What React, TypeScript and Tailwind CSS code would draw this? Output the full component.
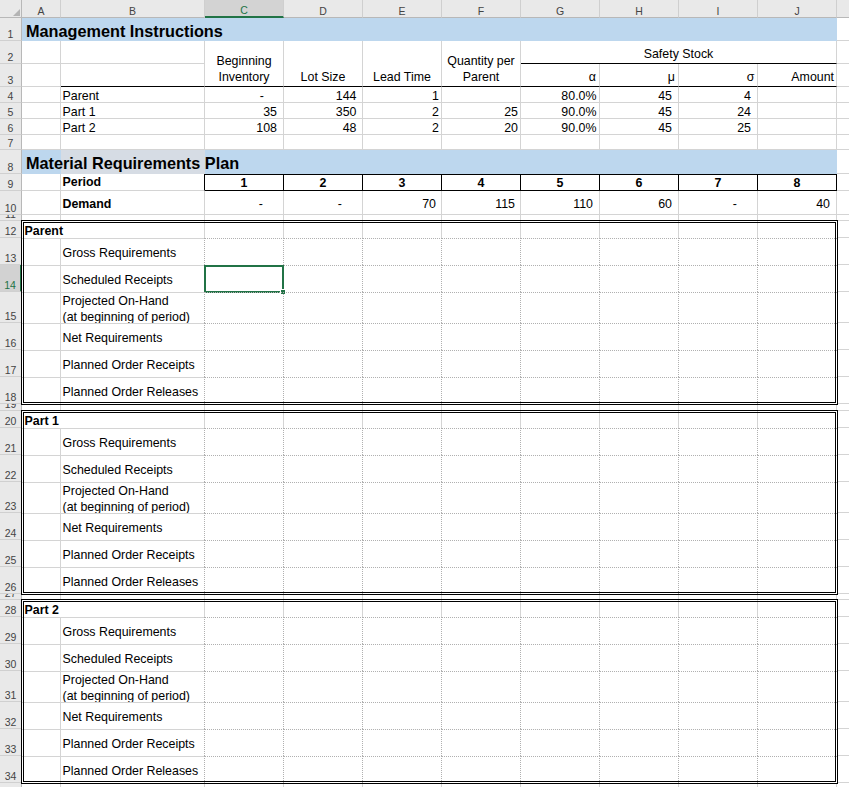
import React from 'react';

function RowHead({ n, h, sel = false }: { n: number; h: string; sel?: boolean }) {
  const base = `${h} w-[22px] shrink-0 flex items-end justify-center overflow-hidden border-b border-b-[#d0d0d0] text-[10.5px] leading-[12px]`;
  return sel ? (
    <div className={`${base} bg-[#d2d2d2] text-[#217346] border-r-2 border-r-[#217346]`}>{n}</div>
  ) : (
    <div className={`${base} bg-[#e9e9e9] text-[#444444] border-r border-r-[#b8b8b8]`}>{n}</div>
  );
}

function KCell({ h }: { h?: string }) {
  return <div className={`${h ?? ''} flex-1 min-w-0 border-b border-[#d4d4d4]`} />;
}

function EmptyRow({ n, h }: { n: number; h: string }) {
  return (
    <div className={`flex ${h}`}>
      <RowHead n={n} h={h} />
      <div className="w-[39px] shrink-0 border-r border-b border-[#d4d4d4]" />
      <div className="w-[144px] shrink-0 border-r border-b border-[#d4d4d4]" />
      {Array.from({ length: 8 }).map((_, j) => (
        <div key={j} className="w-[79px] shrink-0 border-r border-b border-[#d4d4d4]" />
      ))}
      <KCell />
    </div>
  );
}

function Hdr({ lines }: { lines: string[] }) {
  return (
    <div className="w-[79px] shrink-0 border-r border-r-[#d4d4d4] border-b border-b-black flex flex-col justify-end items-center pb-[1px] leading-[15.5px] text-center whitespace-nowrap">
      {lines.map((l) => (
        <span key={l}>{l}</span>
      ))}
    </div>
  );
}

function InstRow({ n, name, vals }: { n: number; name: string; vals: string[] }) {
  const pads = ['pr-[6px]', 'pr-[5.5px]', 'pr-[2px]', 'pr-[2px]', 'pr-[2.5px]', 'pr-[6px]', 'pr-[6px]', 'pr-[2px]'];
  return (
    <div className="flex h-[16px]">
      <RowHead n={n} h="h-[16px]" />
      <div className="w-[39px] shrink-0 border-r border-b border-[#d4d4d4]" />
      <div className="w-[144px] shrink-0 border-r border-b border-[#d4d4d4] flex items-end pl-[1.5px] leading-[11px] whitespace-nowrap">
        {name}
      </div>
      {vals.map((v, j) => (
        <div
          key={j}
          className={`w-[79px] shrink-0 border-r border-b border-[#d4d4d4] flex items-end justify-end leading-[11px] whitespace-nowrap ${
            v === '-' ? 'pr-[19px]' : pads[j]
          }`}
        >
          {v}
        </div>
      ))}
      <KCell />
    </div>
  );
}

const labels = [
  'Gross Requirements',
  'Scheduled Receipts',
  'PROJ',
  'Net Requirements',
  'Planned Order Receipts',
  'Planned Order Releases',
];

function Block({ start, title, sel = false }: { start: number; title: string; sel?: boolean }) {
  const hs = ['h-[27px]', 'h-[27px]', 'h-[31px]', 'h-[27px]', 'h-[27px]', 'h-[27px]'];
  return (
    <div className="flex">
      <div className="flex flex-col w-[22px] shrink-0">
        <RowHead n={start} h="h-[17px]" />
        {hs.map((h, i) => (
          <RowHead key={i} n={start + 1 + i} h={h} sel={sel && i === 1} />
        ))}
      </div>
      <div className="w-[815px] shrink-0 flex flex-col relative z-10 outline-[3px] outline-double outline-black outline-offset-[-2px]">
        <div className="flex h-[17px]">
          <div className="w-[183px] shrink-0 border-r border-[#d4d4d4] flex items-end pb-[1px] pl-[2.5px] font-bold leading-[11px] whitespace-nowrap">
            {title}
          </div>
          {Array.from({ length: 8 }).map((_, j) => (
            <div key={j} className={`w-[79px] shrink-0 ${j < 7 ? 'border-r border-[#d4d4d4]' : ''}`} />
          ))}
        </div>
        {labels.map((lab, i) => (
          <div key={i} className={`flex ${hs[i]}`}>
            <div className="w-[39px] shrink-0 border-t border-r border-[#d4d4d4]" />
            {lab === 'PROJ' ? (
              <div className="w-[143px] shrink-0 border-t border-[#d4d4d4] overflow-hidden pl-[1.5px] pt-[1px] flex flex-col leading-[15.7px] whitespace-nowrap">
                <span>Projected On-Hand</span>
                <span>(at beginning of period)</span>
              </div>
            ) : (
              <div className="w-[143px] shrink-0 border-t border-[#d4d4d4] pl-[1.5px] pt-[1.5px] flex items-center leading-[14px] whitespace-nowrap">
                {lab}
              </div>
            )}
            <div className="w-[80px] shrink-0 border-t border-l border-r border-dotted border-[#b0b0b0] relative">
              {sel && i === 1 && (
                <>
                  <div className="absolute -left-[1px] -top-[1px] -right-[1px] -bottom-[1px] border-2 border-[#217346]" />
                  <div className="absolute -right-[3px] -bottom-[3px] w-[6px] h-[6px] bg-[#217346] border border-white" />
                </>
              )}
            </div>
            {Array.from({ length: 6 }).map((_, j) => (
              <div key={j} className="w-[79px] shrink-0 border-t border-r border-dotted border-[#b0b0b0]" />
            ))}
            <div className="w-[79px] shrink-0 border-t border-dotted border-[#b0b0b0]" />
          </div>
        ))}
      </div>
      <div className="flex-1 min-w-0 flex flex-col">
        <KCell h="h-[17px] flex-none" />
        {hs.map((h, i) => (
          <div key={i} className={`${h} border-b border-[#d4d4d4]`} />
        ))}
      </div>
    </div>
  );
}

export default function App() {
  const cols = ['A', 'B', 'C', 'D', 'E', 'F', 'G', 'H', 'I', 'J'];
  const demand: [string, string][] = [
    ['-', 'pr-[20px]'],
    ['-', 'pr-[20px]'],
    ['70', 'pr-[5px]'],
    ['115', 'pr-[5px]'],
    ['110', 'pr-[6px]'],
    ['60', 'pr-[6px]'],
    ['-', 'pr-[20px]'],
    ['40', 'pr-[6px]'],
  ];
  return (
    <div className="w-[849px] h-[787px] overflow-hidden bg-white text-black font-['Liberation_Sans',Arial,sans-serif] text-[12.4px] leading-[14px] flex flex-col">
      {/* column header */}
      <div className="flex h-[18px] shrink-0">
        <div className="w-[22px] shrink-0 bg-[#e9e9e9] border-r border-b border-[#b8b8b8] flex items-end justify-end pr-[1px] pb-[1px]">
          <svg width="7" height="7" viewBox="0 0 7 7">
            <path d="M7 0V7H0Z" fill="#b4b4b4" />
          </svg>
        </div>
        {cols.map((c) => (
          <div
            key={c}
            className={`${c === 'A' ? 'w-[39px]' : c === 'B' ? 'w-[144px]' : 'w-[79px]'} shrink-0 flex items-end justify-center text-[10.5px] leading-[12px] border-r border-r-[#cfcfcf] ${
              c === 'C'
                ? 'bg-[#d3d3d3] text-[#217346] border-b-2 border-b-[#217346]'
                : 'bg-[#e9e9e9] text-[#444444] border-b border-b-[#b8b8b8]'
            }`}
          >
            {c}
          </div>
        ))}
        <div className="flex-1 min-w-0 bg-[#e9e9e9] border-b border-b-[#b8b8b8]" />
      </div>

      {/* row 1 */}
      <div className="flex h-[23px] shrink-0">
        <RowHead n={1} h="h-[23px]" />
        <div className="w-[815px] shrink-0 bg-[#bdd7ee] flex items-center pt-[3px] pl-[4px] text-[16.25px] leading-[18px] font-bold whitespace-nowrap">
          Management Instructions
        </div>
        <KCell />
      </div>

      {/* rows 2-3 */}
      <div className="flex h-[46px] shrink-0">
        <div className="flex flex-col w-[22px] shrink-0">
          <RowHead n={2} h="h-[23px]" />
          <RowHead n={3} h="h-[23px]" />
        </div>
        <div className="flex flex-col w-[39px] shrink-0">
          <div className="h-[23px] border-r border-b border-[#d4d4d4]" />
          <div className="h-[23px] border-r border-b border-[#d4d4d4]" />
        </div>
        <div className="flex flex-col w-[144px] shrink-0">
          <div className="h-[23px] border-r border-b border-[#d4d4d4]" />
          <div className="h-[23px] border-r border-r-[#d4d4d4] border-b border-b-black" />
        </div>
        <Hdr lines={['Beginning', 'Inventory']} />
        <Hdr lines={['Lot Size']} />
        <Hdr lines={['Lead Time']} />
        <Hdr lines={['Quantity per', 'Parent']} />
        <div className="flex flex-col w-[316px] shrink-0">
          <div className="h-[23px] border-r border-r-[#d4d4d4] border-b border-b-black flex items-end justify-center pb-[1px] leading-[15.5px]">
            Safety Stock
          </div>
          <div className="h-[23px] flex">
            {[
              ['α', 'pr-[3px]'],
              ['μ', 'pr-[3px]'],
              ['σ', 'pr-[2.5px]'],
              ['Amount', 'pr-[2px]'],
            ].map(([t, p]) => (
              <div
                key={t}
                className={`w-[79px] shrink-0 border-r border-r-[#d4d4d4] border-b border-b-black flex items-end justify-end ${p} pb-[1px] leading-[15.5px]`}
              >
                {t}
              </div>
            ))}
          </div>
        </div>
        <div className="flex-1 min-w-0 flex flex-col">
          <div className="h-[23px] border-b border-[#d4d4d4]" />
          <div className="h-[23px] border-b border-[#d4d4d4]" />
        </div>
      </div>

      <InstRow n={4} name="Parent" vals={['-', '144', '1', '', '80.0%', '45', '4', '']} />
      <InstRow n={5} name="Part 1" vals={['35', '350', '2', '25', '90.0%', '45', '24', '']} />
      <InstRow n={6} name="Part 2" vals={['108', '48', '2', '20', '90.0%', '45', '25', '']} />
      <EmptyRow n={7} h="h-[15px]" />

      {/* row 8 */}
      <div className="flex h-[24px] shrink-0">
        <RowHead n={8} h="h-[24px]" />
        <div className="w-[39px] shrink-0 bg-[#bdd7ee] relative z-10 flex items-center pt-[2px] pl-[4px] text-[16.25px] leading-[18px] font-bold whitespace-nowrap">
          Material Requirements Plan
        </div>
        <div className="w-[144px] shrink-0 bg-[#d6dce4]" />
        <div className="w-[632px] shrink-0 bg-[#bdd7ee]" />
        <KCell />
      </div>

      {/* row 9 */}
      <div className="flex h-[17px] shrink-0">
        <RowHead n={9} h="h-[17px]" />
        <div className="w-[39px] shrink-0 border-r border-b border-[#d4d4d4]" />
        <div className="w-[144px] shrink-0 border-r border-r-black border-b border-b-[#d4d4d4] flex items-center pl-[1.5px] font-bold whitespace-nowrap">
          Period
        </div>
        {[1, 2, 3, 4, 5, 6, 7, 8].map((p) => (
          <div
            key={p}
            className="w-[79px] shrink-0 border-t border-r border-b border-black flex items-center justify-center font-bold"
          >
            {p}
          </div>
        ))}
        <KCell />
      </div>

      {/* row 10 */}
      <div className="flex h-[24px] shrink-0">
        <RowHead n={10} h="h-[24px]" />
        <div className="w-[39px] shrink-0 border-r border-b border-[#d4d4d4]" />
        <div className="w-[144px] shrink-0 border-r border-b border-[#d4d4d4] flex items-center pt-[2px] pl-[1.5px] font-bold whitespace-nowrap">
          Demand
        </div>
        {demand.map(([v, p], j) => (
          <div
            key={j}
            className={`w-[79px] shrink-0 border-r border-b border-[#d4d4d4] flex items-center justify-end pt-[2px] ${p}`}
          >
            {v}
          </div>
        ))}
        <KCell />
      </div>

      <EmptyRow n={11} h="h-[6px]" />
      <Block start={12} title="Parent" sel />
      <EmptyRow n={19} h="h-[7px]" />
      <Block start={20} title="Part 1" />
      <EmptyRow n={27} h="h-[6px]" />
      <Block start={28} title="Part 2" />
      <EmptyRow n={35} h="h-[27px]" />
    </div>
  );
}
